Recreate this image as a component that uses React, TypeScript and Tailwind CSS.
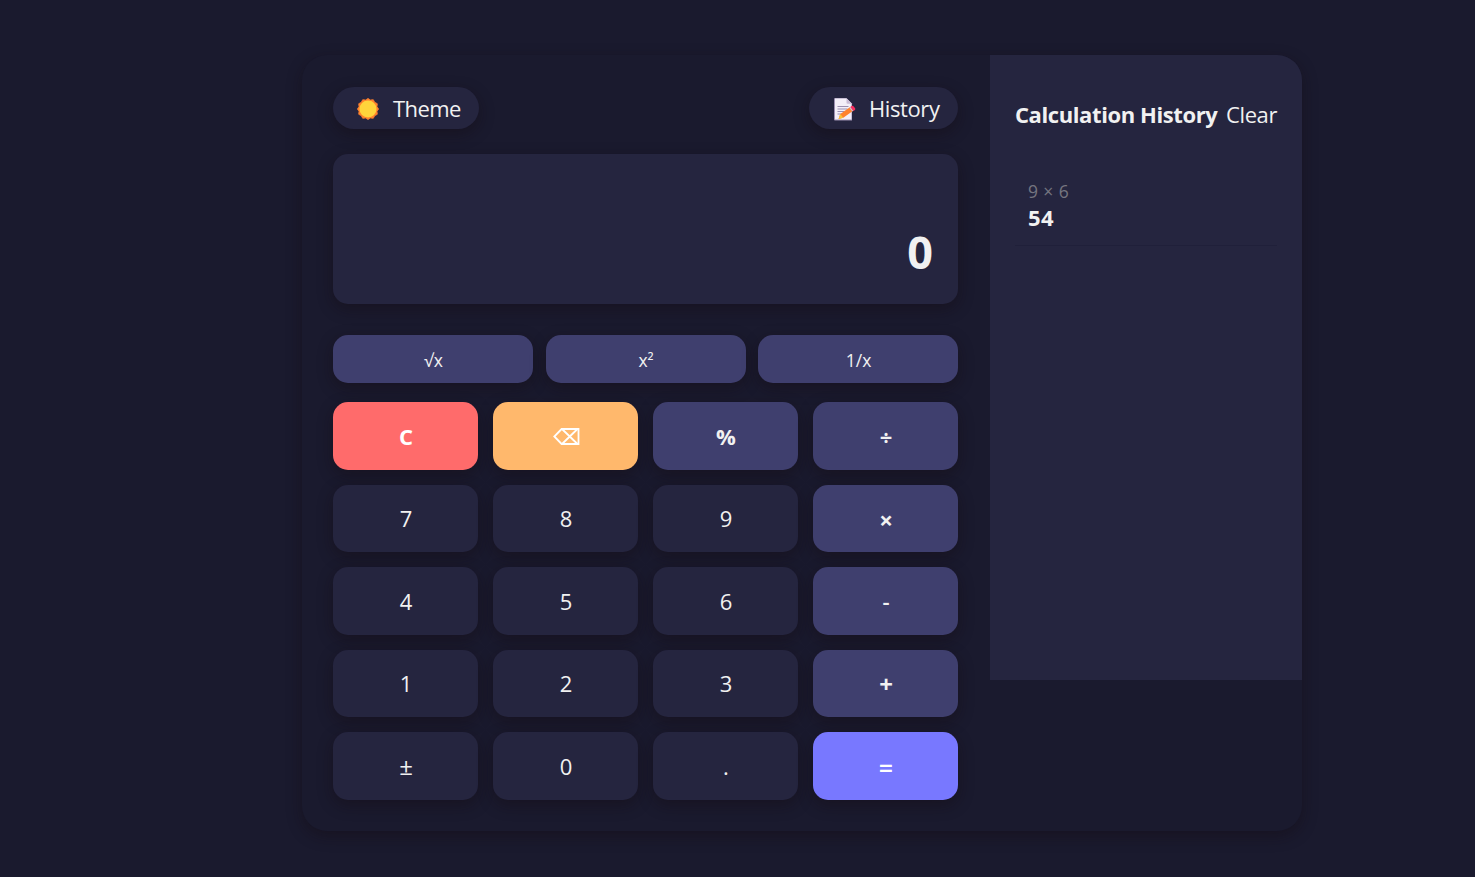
import type { ReactNode } from "react";

type Variant = "number" | "operator" | "clear" | "delete" | "equals";

interface Key {
  label: ReactNode;
  name: string;
  variant: Variant;
}

const variants: Record<Variant, string> = {
  number: "bg-[#25253f] text-[#f1f1f1]",
  operator: "bg-[#3f3f6e] text-[#f1f1f1] font-bold",
  clear: "bg-[#ff6b6b] text-white font-bold",
  delete: "bg-[#ffb86c] text-white",
  equals: "bg-[#7878ff] text-white font-semibold",
};

const shadow = "shadow-[0_5px_15px_rgba(20,10,15,0.4)]";

function SunIcon() {
  return (
    <svg width="22" height="22" viewBox="0 0 22 22" aria-hidden="true">
      <path
        d="M11 .4L13.300 2L16.300 1.700L17.700 4.300L20.300 5.700L20 8.700L21.600 11L20 13.300L20.300 16.300L17.700 17.700L16.300 20.300L13.300 20L11 21.600L8.700 20L5.700 20.300L4.300 17.700L1.700 16.300L2 13.300L.4 11L2 8.700L1.700 5.700L4.300 4.300L5.700 1.700L8.700 2Z"
        fill="#ff822d"
        stroke="#ff822d"
        strokeWidth=".8"
        strokeLinejoin="round"
      />
      <circle cx="11" cy="11" r="8.500" fill="#ffd43b" />
    </svg>
  );
}

function MemoIcon() {
  return (
    <svg width="22" height="23" viewBox="0 0 22 23" aria-hidden="true">
      <path d="M1 0h11.500L18 5.500V22.500H1a1 1 0 0 1-1-1V1a1 1 0 0 1 1-1z" fill="#9b8fb0" />
      <path d="M1 .5h11.500L17.500 5.500V21.500H1z" fill="#f3eef8" />
      <path d="M12.500 .5v4.200a1 1 0 0 0 1 1h4z" fill="#c9bcd6" />
      <path d="M3.500 8.500h11M3.500 11h10M3.500 13.500h7M3.500 16h4" stroke="#9b8fb0" strokeWidth="1" />
      <path d="M4.500 21l1.800-5L15.800 9.300l3 3.800-9.500 6.700z" fill="#ff822d" />
      <path d="M4.500 21l1.800-5 3 3.800z" fill="#f9c23c" />
      <path d="M15.400 9.700l1.200-.9 3 3.700-1.200.9z" fill="#cdc4d6" />
      <path d="M16.300 9l1.200-.9c.7-.5 1.600-.4 2.200.3l1.200 1.500c.6.800.5 1.700-.3 2.300l-1.200.8z" fill="#f92f60" />
    </svg>
  );
}

function BackspaceIcon() {
  return (
    <svg width="27" height="17" viewBox="0 0 27 17" fill="none" stroke="currentColor" strokeWidth="1.800" aria-hidden="true">
      <path d="M8.600 1H25.500V16H8.600L1.300 8.500z" />
      <path d="M9 1L24.500 16M24.500 1L9 16" />
    </svg>
  );
}

const keys: Key[] = [
  { label: "C", name: "clear", variant: "clear" },
  { label: <BackspaceIcon />, name: "backspace", variant: "delete" },
  { label: "%", name: "percent", variant: "operator" },
  { label: "÷", name: "divide", variant: "operator" },
  { label: "7", name: "7", variant: "number" },
  { label: "8", name: "8", variant: "number" },
  { label: "9", name: "9", variant: "number" },
  { label: <span className="pt-[2px] text-[24px]">×</span>, name: "multiply", variant: "operator" },
  { label: "4", name: "4", variant: "number" },
  { label: "5", name: "5", variant: "number" },
  { label: "6", name: "6", variant: "number" },
  { label: <span className="font-semibold">-</span>, name: "subtract", variant: "operator" },
  { label: "1", name: "1", variant: "number" },
  { label: "2", name: "2", variant: "number" },
  { label: "3", name: "3", variant: "number" },
  { label: <span className="text-[24px]">+</span>, name: "add", variant: "operator" },
  { label: <span className="text-[24px]">±</span>, name: "sign", variant: "number" },
  { label: "0", name: "0", variant: "number" },
  { label: ".", name: "point", variant: "number" },
  { label: <span className="pt-[3px] text-[25px]">=</span>, name: "equals", variant: "equals" },
];

const scientific = [
  { label: "√x", name: "sqrt" },
  { label: "x²", name: "square" },
  { label: "1/x", name: "inverse" },
];

export default function App() {
  return (
    <div className="h-[877px] overflow-hidden bg-[#1a1a2e] pt-[55px] pl-[302px] font-['Open_Sans','Noto_Sans',sans-serif] text-[22px] text-[#f1f1f1]">
      <div className={`flex h-[776px] w-[1000px] items-start overflow-hidden rounded-[25px] bg-[#1a1a2e] ${shadow}`}>
        <main className="w-[688px] pt-8 pr-8 pl-[31px]">
          <div className="flex h-[42px] justify-between">
            <button className={`flex w-[146px] items-center rounded-full bg-[#25253f] pl-[23.500px] ${shadow}`}>
              <span className="pt-[2px]">
                <SunIcon />
              </span>
              <span className="ml-[14.500px] tracking-[-0.600px]">Theme</span>
            </button>
            <button className={`flex w-[149px] items-center rounded-full bg-[#25253f] pl-[25px] ${shadow}`}>
              <span className="pt-[2px]">
                <MemoIcon />
              </span>
              <span className="ml-[13px] tracking-[-0.400px]">History</span>
            </button>
          </div>

          <div className={`mt-[25px] flex h-[150px] items-end justify-end rounded-[15px] bg-[#25253f] px-[25px] pb-[22px] ${shadow}`}>
            <span className="text-[45px] leading-[61px] font-bold">0</span>
          </div>

          <div className="mt-[31px] grid grid-cols-3 gap-x-[12.500px]">
            {scientific.map((key) => (
              <button key={key.name} className={`h-12 rounded-[15px] bg-[#3f3f6e] pt-[3px] pl-px text-[17.500px] ${shadow}`}>
                {key.label}
              </button>
            ))}
          </div>

          <div className="mt-[19px] grid auto-rows-[67.500px] grid-cols-4 gap-[15px]">
            {keys.map((key) => (
              <button
                key={key.name}
                className={`flex items-center justify-center rounded-[15px] pt-px pl-px ${shadow} ${variants[key.variant]}`}
              >
                {key.label}
              </button>
            ))}
          </div>
        </main>

        <aside className="h-[625px] w-[312px] bg-[#25253f] px-[25px] pt-[44px]">
          <div className="flex items-center justify-between whitespace-nowrap leading-[30px]">
            <h2 className="font-bold tracking-[-0.400px]">Calculation History</h2>
            <button className="tracking-[-0.400px]">Clear</button>
          </div>
          <div className="mt-[37px] h-[80px] border-b border-[#20203a] px-[13px] pt-[12px]">
            <div className="text-[17.500px] leading-[26px] tracking-[0.400px] text-[#757580]">9 × 6</div>
            <div className="leading-[27px] font-bold tracking-[0.300px]">54</div>
          </div>
        </aside>
      </div>
    </div>
  );
}
